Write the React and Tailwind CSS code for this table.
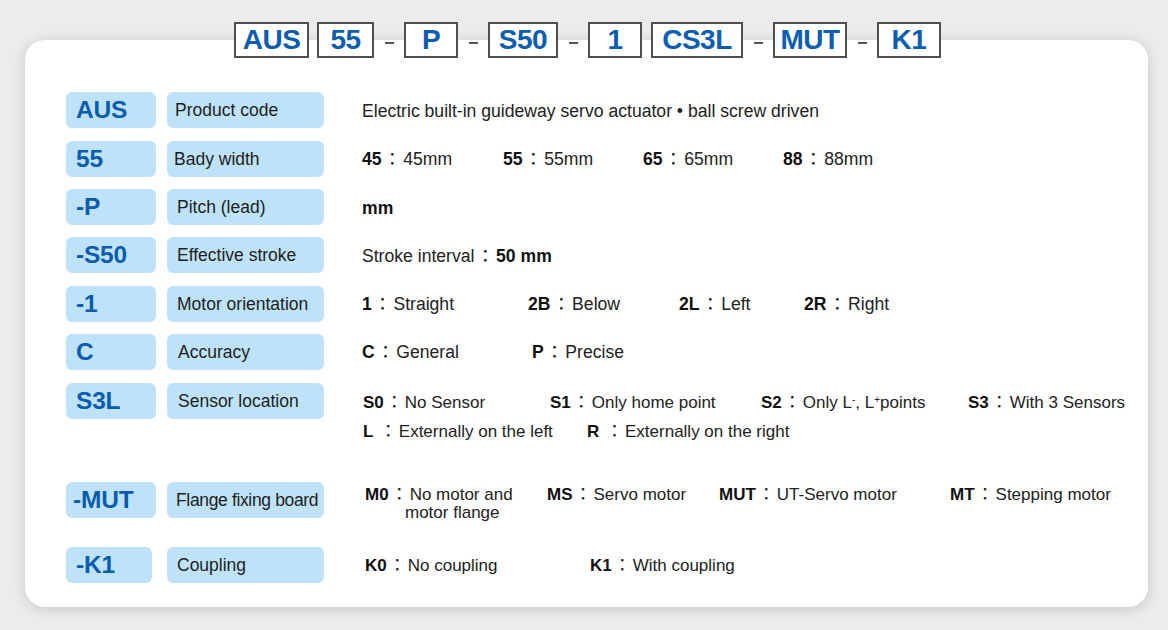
const codes = [
  { t: 'AUS', w: 'w-[75px]' },
  { t: '55', w: 'w-[57px]', gap: 'ml-[8px]' },
  { t: 'P', w: 'w-[54px]', dash: true },
  { t: 'S50', w: 'w-[70px]', dash: true },
  { t: '1', w: 'w-[54px]', dash: true },
  { t: 'CS3L', w: 'w-[92px]', gap: 'ml-[9px]' },
  { t: 'MUT', w: 'w-[74px]', dash: true },
  { t: 'K1', w: 'w-[64px]', dash: true },
];

function Colon() {
  return <span className="mx-[2px] font-['Noto_Sans_CJK_TC',sans-serif]">：</span>;
}

function Item({ k, v, w }) {
  return (
    <span className={`shrink-0 whitespace-nowrap ${w}`}>
      <b className="font-bold text-[#111]">{k}</b>
      <Colon />
      {v}
    </span>
  );
}

function Row({ code, name, mt, codeW = 'w-[90px]', codePad = 'pl-[10px]', namePad = 'pl-[10px]', align = 'items-center', children }) {
  return (
    <div className={`flex h-[36px] ${mt}`}>
      <div className="w-[101px] shrink-0">
        <div className={`h-[36px] ${codeW} rounded-[6px] bg-[#bee3f8] flex items-center ${codePad} text-[24.5px] font-bold text-[#0b5cad] tracking-[-0.2px]`}>
          {code}
        </div>
      </div>
      <div className={`h-[36px] w-[157px] shrink-0 rounded-[6px] bg-[#bee3f8] flex items-center ${namePad} text-[17.5px] text-[#1e1e1e] whitespace-nowrap`}>
        {name}
      </div>
      <div className={`ml-[38px] flex ${align} text-[17.6px] text-[#222] whitespace-nowrap`}>{children}</div>
    </div>
  );
}

export default function App() {
  return (
    <div className="w-[1168px] h-[630px] bg-[#ececec] pl-[25px] pr-[20px] pt-[40px] font-['Liberation_Sans','Noto_Sans_CJK_SC',sans-serif] overflow-hidden">
      <div className="flex flex-col h-[567px] rounded-[20px] bg-white shadow-[0_2px_14px_rgba(0,0,0,0.16)]">
        <div className="flex justify-center items-start -mt-[18px] pl-[2px]">
          {codes.map((c) => (
            <div key={c.t} className="flex items-start">
              {c.dash && (
                <div className="w-[30px] h-[36px] flex justify-center">
                  <span className="mt-[20px] w-[9px] h-[2px] bg-[#555]" />
                </div>
              )}
              <div
                className={`${c.gap || ''} ${c.w} h-[36px] bg-white border-2 border-[#4f4f4f] flex items-center justify-center text-[28px] font-bold text-[#0d5db0] tracking-[-0.5px]`}
              >
                {c.t}
              </div>
            </div>
          ))}
        </div>

        <div className="pl-[41px] pt-[34px]">
          <Row code="AUS" name="Product code" namePad="pl-[8px]">
            <span className="pt-[3px]">Electric built-in guideway servo actuator • ball screw driven</span>
          </Row>
          <Row code="55" name="Bady width" namePad="pl-[7px]" mt="mt-[13px]">
            <Item k="45" v="45mm" w="w-[141px]" />
            <Item k="55" v="55mm" w="w-[140px]" />
            <Item k="65" v="65mm" w="w-[140px]" />
            <Item k="88" v="88mm" w="w-[120px]" />
          </Row>
          <Row code="-P" name="Pitch (lead)" mt="mt-[12px]">
            <b className="font-bold text-[#111] pt-[2px]">mm</b>
          </Row>
          <Row code="-S50" name="Effective stroke" mt="mt-[12px]">
            <span className="pt-[2px]">
              Stroke interval<Colon />
              <b className="font-bold text-[#111]">50 mm</b>
            </span>
          </Row>
          <Row code="-1" name="Motor orientation" mt="mt-[13px]">
            <Item k="1" v="Straight" w="w-[166px]" />
            <Item k="2B" v="Below" w="w-[151px]" />
            <Item k="2L" v="Left" w="w-[125px]" />
            <Item k="2R" v="Right" w="w-[100px]" />
          </Row>
          <Row code="C" name="Accuracy" namePad="pl-[11px]" mt="mt-[12px]">
            <Item k="C" v="General" w="w-[170px]" />
            <Item k="P" v="Precise" w="w-[120px]" />
          </Row>
          <Row code="S3L" name="Sensor location" namePad="pl-[11px]" mt="mt-[13px]" align="items-start">
            <div className="pt-[4px] pl-[1px] leading-[27px] text-[17px]">
              <div className="flex">
                <Item k="S0" v="No  Sensor" w="w-[187px]" />
                <Item k="S1" v="Only home point" w="w-[211px]" />
                <span className="shrink-0 whitespace-nowrap w-[207px]">
                  <b className="font-bold text-[#111]">S2</b>
                  <Colon />
                  Only L<sup className="text-[10px]">-</sup>, L<sup className="text-[10px]">+</sup>points
                </span>
                <Item k="S3" v="With 3 Sensors" w="w-[170px]" />
              </div>
              <div className="flex">
                <Item k="L " v="Externally on the left" w="w-[224px]" />
                <Item k="R " v="Externally on the right" w="w-[220px]" />
              </div>
            </div>
          </Row>
          <Row code="-MUT" name={<span className="tracking-[-0.35px]">Flange fixing board</span>} codePad="pl-[7px]" namePad="pl-[9px]" mt="mt-[63px]" align="items-start">
            <div className="flex pt-[2px] pl-[3px] leading-[18px] text-[17px]">
              <span className="shrink-0 w-[182px]">
                <b className="font-bold text-[#111]">M0</b>
                <Colon />
                No motor and
                <br />
                <span className="pl-[40px]">motor flange</span>
              </span>
              <Item k="MS" v="Servo motor" w="w-[172px]" />
              <Item k="MUT" v="UT-Servo motor" w="w-[231px]" />
              <Item k="MT" v="Stepping motor" w="w-[170px]" />
            </div>
          </Row>
          <Row code="-K1" name="Coupling" codeW="w-[86px]" mt="mt-[29px]">
            <div className="flex pl-[3px] text-[17px]">
              <Item k="K0" v="No coupling" w="w-[225px]" />
              <Item k="K1" v="With coupling" w="w-[160px]" />
            </div>
          </Row>
        </div>
      </div>
    </div>
  );
}
